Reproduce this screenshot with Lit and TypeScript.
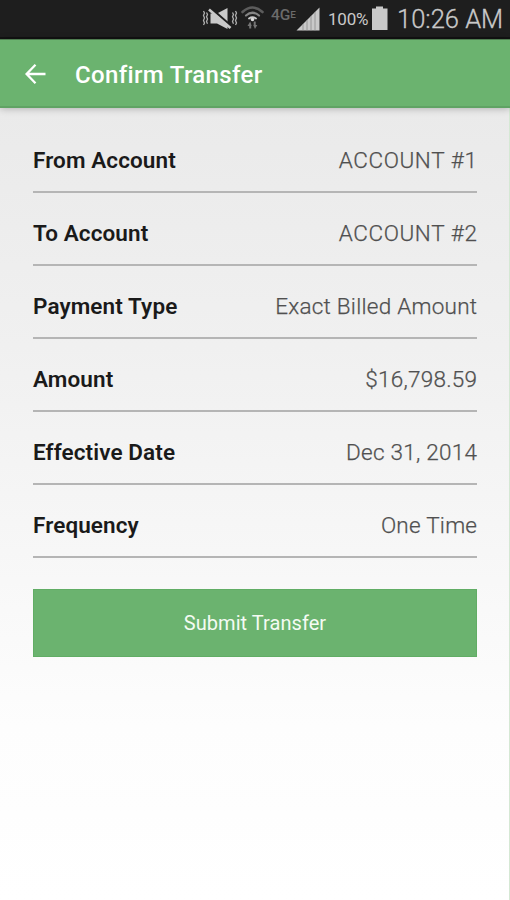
import { LitElement, html, css, svg } from "lit";
import { customElement, property } from "lit/decorators.js";

@customElement("status-bar")
class StatusBar extends LitElement {
  static styles = css`
    :host {
      display: flex;
      justify-content: flex-end;
      height: 39px;
      box-sizing: border-box;
      background: #1e1e1e;
      border-bottom: 2px solid #121212;
      color: #c9c9c9;
      font-family: Roboto, sans-serif;
    }
    .icons { width: 120px; height: 37px; flex: none; }
    .pct { width: 41px; margin-left: 8px; margin-right: -1px; font-size: 17px; line-height: 38px; letter-spacing: -0.2px; white-space: nowrap; }
    .battery { width: 18px; height: 37px; margin-left: 3px; flex: none; }
    .clock { width: 107px; margin-left: 8px; margin-right: 6px; font-size: 25.5px; line-height: 38px; font-weight: 300; white-space: nowrap; -webkit-text-stroke: 0.3px #c9c9c9; }
    .net { font: 500 14px Roboto, sans-serif; fill: #6b6b6b; }
    .net-small { font-size: 9px; }
  `;
  render() {
    return html`
      <svg class="icons" viewBox="200 0 120 37">
        <path d="M203.500 11l1 2-1 2.500 1 2.500-1 2.500 1 2.500-1 2M206.500 12.500l1 2-1 2.300 1 2.300-1 2.300 1 2.300M232.500 12.500l1 2-1 2.300 1 2.300-1 2.300 1 2.300M235.500 11l1 2-1 2.500 1 2.500-1 2.500 1 2.500-1 2" fill="none" stroke="#b0b0b0" stroke-width="1.300" />
        <path d="M210.500 13.500h6.500l10.500-5.500v21l-10.500-5.500h-6.500z" fill="#c9c9c9" />
        <path d="M210.500 8l21 18.500" stroke="#1e1e1e" stroke-width="2.400" />
        <path d="M209 9.500l21.500 18.500" stroke="#c9c9c9" stroke-width="2.600" />
        <g fill="none" stroke-linecap="round">
          <path d="M242.500 12q10-9 20 0" stroke="#5c5c5c" stroke-width="2.600" />
          <path d="M246 15.500q6.500-5.500 13 0" stroke="#858585" stroke-width="2.200" />
          <path d="M249 18.500q3.500-2.500 7 0" stroke="#c9c9c9" stroke-width="1.800" />
        </g>
        <circle cx="252.500" cy="19.500" r="1.800" fill="#ddd" />
        <path d="M247.500 26l2.700-4.500 1.500 4.500h-.5v2.500h-2v-2.500zM253.200 25h.5v-3.500h2v3.500h1.600l-2.300 4z" fill="#757575" />
        <text class="net" x="271" y="19.500" textLength="25" lengthAdjust="spacingAndGlyphs">4G<tspan class="net-small" dy="-1.500">E</tspan></text>
        <path d="M296.500 30.500L319.500 7.500v23z" fill="#c9c9c9" />
        ${[303, 307, 311, 315].map((x) => svg`<path d="M${x} ${327 - x}V30.500" stroke="#8b8b8b" stroke-width=".8" />`)}
      </svg>
      <span class="pct">100%</span>
      <svg class="battery" viewBox="0 0 18 37"><path d="M1 8.500h4v-2h7v2h4.500v21.500H1z" fill="#c9c9c9" /></svg>
      <span class="clock">10:26 AM</span>
    `;
  }
}

@customElement("app-bar")
class AppBar extends LitElement {
  @property() heading = "";
  static styles = css`
    :host {
      display: flex;
      align-items: center;
      height: 69px;
      box-sizing: border-box;
      padding: 1px 0 0 24px;
      background: #6bb36f;
      border-top: 1px solid #4f7d50;
      border-bottom: 2px solid #60a364;
      color: #fff;
      box-shadow: 0 1px 7px rgba(0, 0, 0, 0.24);
    }
    .back { width: 23px; height: 22px; }
    .title { margin-left: 28px; padding-top: 2px; font: 500 24px/30px Roboto, sans-serif; letter-spacing: 0.34px; }
  `;
  render() {
    return html`
      <svg class="back" viewBox="0 0 23 22" fill="none" stroke="#fff" stroke-width="2.300">
        <path d="M21.500 11H3M11.500 1.800L2.600 11l8.900 9.200" />
      </svg>
      <span class="title">${this.heading}</span>
    `;
  }
}

@customElement("detail-row")
class DetailRow extends LitElement {
  @property() label = "";
  @property() value = "";
  static styles = css`
    :host {
      display: flex;
      justify-content: space-between;
      align-items: center;
      height: 73px;
      box-sizing: border-box;
      padding-top: 8px;
      border-bottom: 2px solid #b5b5b5;
      font-family: Roboto, sans-serif;
      font-size: 22.500px;
      line-height: 28px;
      white-space: nowrap;
    }
    .label { font-weight: 600; color: #1a1a1a; letter-spacing: 0.1px; }
    .value { font-weight: 300; color: #505050; letter-spacing: 0.25px; margin-right: -0.25px; -webkit-text-stroke: 0.25px #505050; }
    .caps { letter-spacing: 0.6px; margin-right: -0.6px; }
  `;
  render() {
    const caps = this.value === this.value.toUpperCase() && /[A-Z]/.test(this.value);
    return html`<span class="label">${this.label}</span><span class="value ${caps ? "caps" : ""}">${this.value}</span>`;
  }
}

@customElement("app-root")
class AppRoot extends LitElement {
  static styles = css`
    :host {
      display: flex;
      flex-direction: column;
      height: 900px;
      overflow: hidden;
      background: #fff;
    }
    status-bar, app-bar { flex: none; }
    app-bar { z-index: 1; }
    .content {
      flex: 1;
      padding: 12px 32px 0 33px;
      border-right: 1px solid #d5e8d4;
      background: linear-gradient(#eaeaea, #f0f0f0 30%, #f7f7f7 56%, #fdfdfd 78%, #fff);
    }
    .submit {
      display: block;
      width: 444px;
      height: 68px;
      margin-top: 31px;
      padding: 0;
      border: 1px solid #61ad65;
      background: #6bb36f;
      color: #f4fbf3;
      font: 400 20px/26px Roboto, sans-serif;
      letter-spacing: 0.05px;
    }
  `;
  private rows = [
    ["From Account", "ACCOUNT #1"],
    ["To Account", "ACCOUNT #2"],
    ["Payment Type", "Exact Billed Amount"],
    ["Amount", "$16,798.59"],
    ["Effective Date", "Dec 31, 2014"],
    ["Frequency", "One Time"],
  ];
  render() {
    return html`
      <status-bar></status-bar>
      <app-bar heading="Confirm Transfer"></app-bar>
      <main class="content">
        ${this.rows.map(([l, v]) => html`<detail-row .label=${l} .value=${v}></detail-row>`)}
        <button class="submit">Submit Transfer</button>
      </main>
    `;
  }
}
